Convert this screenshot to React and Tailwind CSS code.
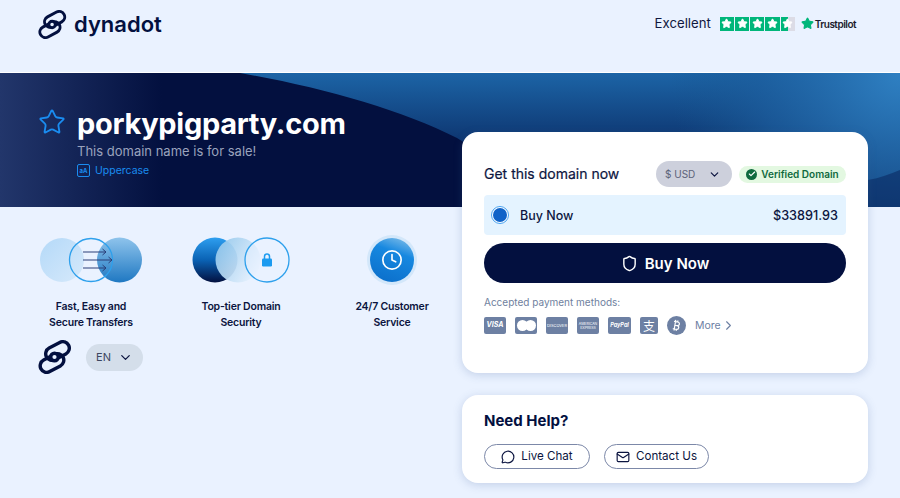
import { ChevronDown, ChevronRight, Shield, Star, MessageCircle, Mail, Clock, Check, Bitcoin } from "lucide-react";

const NAVY = "#03103f";

function LogoMark({ className }) {
  return (
    <svg viewBox="0 0 34 34" fill="none" className={className} stroke={NAVY} strokeWidth="3.400">
      <rect x="7" y="4.500" width="25" height="13" rx="6.500" transform="rotate(-28 19.500 11)" />
      <rect x="1.500" y="16.500" width="25" height="13" rx="6.500" transform="rotate(-28 14 23)" />
      <circle cx="16.500" cy="17" r="3.800" fill="#eaf2ff" />
    </svg>
  );
}

function TrustStars() {
  return (
    <div className="flex gap-[1px]">
      {[0, 1, 2, 3, 4].map((i) => (
        <div
          key={i}
          className={
            i === 4
              ? "flex h-[14px] w-[14.2px] items-center justify-center bg-[linear-gradient(90deg,#00b67a_50%,#dcdce6_50%)]"
              : "flex h-[14px] w-[14.2px] items-center justify-center bg-[#00b67a]"
          }
        >
          <Star size={11} fill="#fff" stroke="#fff" />
        </div>
      ))}
    </div>
  );
}

function Header() {
  return (
    <header className="flex h-[73px] items-start justify-between border-b border-white pl-[38px] pr-[44px]">
      <div className="flex items-center gap-[7px] pt-[10px]">
        <LogoMark className="h-[29px] w-[29px]" />
        <span className="text-[22px] font-semibold leading-[29px] text-[#03103f]">dynadot</span>
      </div>
      <div className="flex items-center pt-[15px]">
        <span className="-mt-[2px] mr-[9px] text-[13.200px] leading-[16px] text-[#10183f]">Excellent</span>
        <TrustStars />
        <Star size={13} fill="#00b67a" stroke="#00b67a" className="ml-[6px]" />
        <span className="ml-[1px] mt-[2px] text-[10px] font-semibold tracking-[-0.5px] text-[#1b1b2b]">Trustpilot</span>
      </div>
    </header>
  );
}

function HeroBackdrop() {
  return (
    <svg viewBox="0 0 900 134" preserveAspectRatio="none" className="absolute inset-0 h-full w-full">
      <defs>
        <linearGradient id="left" x1="0" x2="1" y1="0" y2="0">
          <stop offset="0" stopColor="#22366b" />
          <stop offset="0.18" stopColor="#03103f" />
        </linearGradient>
        <linearGradient id="wave" x1="0" x2="0" y1="0" y2="1">
          <stop offset="0" stopColor="#1c64a6" />
          <stop offset="0.5" stopColor="#0e3772" />
          <stop offset="1" stopColor="#061a4c" />
        </linearGradient>
        <radialGradient id="glow" cx="900" cy="0" r="230" gradientUnits="userSpaceOnUse">
          <stop offset="0" stopColor="#2f80c2" />
          <stop offset="0.6" stopColor="#1d5f9f" stopOpacity="0.700" />
          <stop offset="1" stopColor="#17558f" stopOpacity="0" />
        </radialGradient>
      </defs>
      <rect width="900" height="134" fill="url(#left)" />
      <path d="M240 0 C320 14 400 36 457 65 C490 84 510 110 530 134 L900 134 L900 0 Z" fill="url(#wave)" />
      <rect x="500" width="400" height="134" fill="url(#glow)" />
      <path d="M868 107 C880 105 890 101 900 97 L900 134 L868 134 Z" fill="#0a2a62" fillOpacity="0.600" />
    </svg>
  );
}

function Hero() {
  return (
    <section className="relative h-[134px] bg-[#03103f]">
      <HeroBackdrop />
      <div className="relative flex items-start pl-[38px] pt-[33px]">
        <Star size={28} stroke="#1a8cf0" strokeWidth={1.600} className="mt-[2px] shrink-0" />
        <div className="ml-[11px]">
          <h1 className="text-[29px] font-bold leading-[36px] tracking-[-0.3px] text-white">porkypigparty.com</h1>
          <p className="text-[13px] leading-[18px] text-[#9aa3bd]">This domain name is for sale!</p>
          <div className="mt-[4px] flex items-center gap-[5px]">
            <span className="flex h-[13px] w-[13px] items-center justify-center rounded-[2px] border border-[#1a8cf0] text-[6px] font-bold leading-none text-[#1a8cf0]">
              aA
            </span>
            <span className="text-[10.500px] leading-[13px] text-[#1a8cf0]">Uppercase</span>
          </div>
        </div>
      </div>
    </section>
  );
}

function TransferArt() {
  return (
    <svg viewBox="0 0 104 46" className="h-[46px] w-[104px]">
      <defs>
        <linearGradient id="soft" x1="0" x2="1" y1="0" y2="1">
          <stop offset="0" stopColor="#b4d9f8" />
          <stop offset="1" stopColor="#d6e9fb" />
        </linearGradient>
        <linearGradient id="deep" x1="0" x2="0" y1="0" y2="1">
          <stop offset="0" stopColor="#8fc4ec" />
          <stop offset="1" stopColor="#1f78c2" />
        </linearGradient>
      </defs>
      <circle cx="23" cy="23" r="22" fill="url(#soft)" />
      <circle cx="80.500" cy="23" r="22.500" fill="url(#deep)" />
      <circle cx="52" cy="23" r="21.500" fill="none" stroke="#2ea0ec" strokeWidth="1.300" />
      <g fill="none" stroke="#2a3f78" strokeWidth="1">
        <path d="M44 15 H67 M63.500 12 L67 15 L63.500 18" />
        <path d="M44 23 H73 M69.500 20 L73 23 L69.500 26" />
        <path d="M44 31 H67 M63.500 28 L67 31 L63.500 34" />
      </g>
    </svg>
  );
}

function SecurityArt() {
  return (
    <svg viewBox="0 0 100 46" className="h-[46px] w-[100px]">
      <defs>
        <linearGradient id="blue" x1="0" x2="0" y1="0" y2="1">
          <stop offset="0" stopColor="#2e9ff0" />
          <stop offset="0.5" stopColor="#0a62b4" />
          <stop offset="1" stopColor="#03103f" />
        </linearGradient>
        <linearGradient id="glass" x1="0" x2="1" y1="0" y2="0.600">
          <stop offset="0" stopColor="#8cc4ea" />
          <stop offset="1" stopColor="#e4f0fd" />
        </linearGradient>
      </defs>
      <circle cx="24" cy="23" r="22.500" fill="url(#blue)" />
      <circle cx="47" cy="23" r="22.500" fill="url(#glass)" fillOpacity="0.920" />
      <circle cx="76" cy="23" r="22" fill="#eaf2ff" fillOpacity="0.500" stroke="#2ea0ec" strokeWidth="1.300" />
      <path d="M73.500 22 V19.500 A2.500 2.500 0 0 1 78.500 19.500 V22" fill="none" stroke="#1c9bf0" strokeWidth="1.500" />
      <rect x="71" y="21.500" width="10" height="8" rx="1.200" fill="#1c9bf0" />
    </svg>
  );
}

function Feature({ art, lines }) {
  return (
    <div className="flex flex-col items-center">
      <div className="flex h-[46px] items-center justify-center">{art}</div>
      <div className="mt-[16px] text-center text-[10.500px] font-semibold leading-[16px] tracking-[-0.2px] text-[#0c1540]">
        {lines.map((l) => (
          <div key={l}>{l}</div>
        ))}
      </div>
    </div>
  );
}

function LeftColumn() {
  return (
    <div className="w-[462px] shrink-0">
      <div className="grid grid-cols-[150px_150px_152px] pl-[16px] pt-[30px]">
        <Feature art={<TransferArt />} lines={["Fast, Easy and", "Secure Transfers"]} />
        <Feature art={<SecurityArt />} lines={["Top-tier Domain", "Security"]} />
        <Feature
          art={
            <div className="flex h-[50px] w-[50px] items-center justify-center rounded-full bg-[#d3e7fa]">
              <div className="flex h-[44px] w-[44px] items-center justify-center rounded-full bg-[linear-gradient(200deg,#8cc4ea_0%,#1788e0_35%,#0a6cc8_100%)]">
                <Clock size={22} stroke="#fff" strokeWidth={1.800} />
              </div>
            </div>
          }
          lines={["24/7 Customer", "Service"]}
        />
      </div>
      <div className="flex items-center pl-[38px] pt-[9px]">
        <LogoMark className="h-[34px] w-[34px]" />
        <div className="ml-[14px] flex h-[27px] w-[57px] items-center justify-center gap-[7px] rounded-full bg-[#d4deea] text-[11px] text-[#3c4660]">
          EN
          <ChevronDown size={15} stroke="#0c1540" />
        </div>
      </div>
    </div>
  );
}

function PayBadge({ className, children }) {
  return (
    <div className={"flex h-[17px] items-center justify-center overflow-hidden rounded-[2px] bg-[#6d80a3] text-white " + className}>
      {children}
    </div>
  );
}

function PaymentIcons() {
  return (
    <div className="mt-[7px] flex items-center">
      <PayBadge className="w-[22px] text-[7px] font-bold italic">VISA</PayBadge>
      <PayBadge className="ml-[9px] w-[22px]">
        <span className="h-[11px] w-[11px] rounded-full bg-white" />
        <span className="-ml-[3px] h-[11px] w-[11px] rounded-full bg-white" />
      </PayBadge>
      <PayBadge className="ml-[9px] w-[22px] text-[4px]">DISCOVER</PayBadge>
      <PayBadge className="ml-[9px] w-[22px] text-center text-[3.500px] leading-[4px]">AMERICAN EXPRESS</PayBadge>
      <PayBadge className="ml-[9px] w-[23px] text-[5.500px] font-bold italic">PayPal</PayBadge>
      <PayBadge className="ml-[9px] w-[18px] text-[12px] leading-none font-['Noto_Sans_CJK_SC',sans-serif]">支</PayBadge>
      <div className="ml-[9px] flex h-[19px] w-[19px] items-center justify-center rounded-full bg-[#6d80a3]">
        <Bitcoin size={13} stroke="#fff" strokeWidth={2.200} />
      </div>
      <span className="ml-[9px] text-[10.500px] text-[#6d80a3]">More</span>
      <ChevronRight size={15} stroke="#6d80a3" strokeWidth={1.800} />
    </div>
  );
}

function BuyCard() {
  return (
    <div className="h-[241px] rounded-[16px] bg-white px-[22px] pt-[29px] shadow-[0_2px_10px_rgba(60,90,150,0.22)]">
      <div className="flex items-center">
        <span className="text-[14px] leading-[26px] text-[#0c1540] [-webkit-text-stroke:0.2px_#0c1540]">Get this domain now</span>
        <div className="ml-auto flex h-[26px] w-[76px] items-center justify-between rounded-full bg-[#cdd0dc] pl-[9px] pr-[11px] text-[10px] text-[#5c6278]">
          $ USD
          <ChevronDown size={13} stroke="#0c1540" strokeWidth={2.200} />
        </div>
        <div className="ml-[7px] flex h-[17px] w-[107px] items-center justify-center gap-[4px] rounded-full bg-[#e3f8e1] text-[10px] font-semibold text-[#0f6a3e]">
          <span className="flex h-[11px] w-[11px] items-center justify-center rounded-full bg-[#0f6a3e]">
            <Check size={8} stroke="#fff" strokeWidth={3.500} />
          </span>
          Verified Domain
        </div>
      </div>
      <div className="mt-[8px] flex h-[40px] items-center rounded-[4px] bg-[#e4f3ff] pl-[7px] pr-[8px]">
        <span className="flex h-[18px] w-[18px] items-center justify-center rounded-full border border-[#4aa3f0] bg-white">
          <span className="h-[14px] w-[14px] rounded-full bg-[#0f62c8]" />
        </span>
        <span className="ml-[11px] mt-[2px] text-[12.500px] font-medium text-[#0c1540]">Buy Now</span>
        <span className="ml-auto mt-[1px] text-[12.700px] font-medium text-[#0c1540]">$33891.93</span>
      </div>
      <button className="mt-[8px] flex h-[40px] w-full items-center justify-center gap-[7px] rounded-full bg-[#03103f] pt-[2px] text-[15px] font-semibold text-white">
        <Shield size={17} stroke="#fff" strokeWidth={2} className="-mt-[2px]" />
        Buy Now
      </button>
      <div className="mt-[12px] text-[10px] leading-[14px] text-[#6f7f9e]">Accepted payment methods:</div>
      <PaymentIcons />
    </div>
  );
}

function HelpCard() {
  return (
    <div className="mt-[22px] h-[88px] rounded-[16px] bg-white pl-[22px] pt-[16px] shadow-[0_2px_10px_rgba(60,90,150,0.22)]">
      <h2 className="text-[15px] font-bold leading-[20px] text-[#03103f]">Need Help?</h2>
      <div className="mt-[13px] flex gap-[14px]">
        <button className="flex h-[25px] w-[106px] items-center justify-center gap-[6px] rounded-full border border-[#7c88a8] pt-[1px] text-[11.600px] text-[#0c1540]">
          <MessageCircle size={14} stroke="#0c1540" strokeWidth={2} />
          Live Chat
        </button>
        <button className="flex h-[25px] w-[105px] items-center justify-center gap-[6px] rounded-full border border-[#7c88a8] pt-[1px] text-[11.600px] text-[#0c1540]">
          <Mail size={14} stroke="#0c1540" strokeWidth={2} />
          Contact Us
        </button>
      </div>
    </div>
  );
}

export default function App() {
  return (
    <div className="h-[498px] w-[900px] overflow-hidden bg-[#eaf2ff] font-['Inter',sans-serif]">
      <Header />
      <Hero />
      <div className="flex">
        <LeftColumn />
        <div className="relative -mt-[75px] w-[406px]">
          <BuyCard />
          <HelpCard />
        </div>
      </div>
    </div>
  );
}
